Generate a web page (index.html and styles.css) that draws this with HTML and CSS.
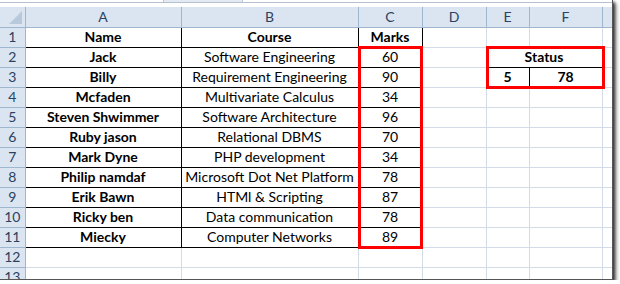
FILE: index.html
```html
<!DOCTYPE html>
<html>
<head>
<meta charset="utf-8">
<link rel="stylesheet" href="styles.css">
</head>
<body>
<div class="sheet">
  <div class="topbar">
    <div class="tab"></div>
    <div class="topline"></div>
  </div>
  <div class="gridwrap">
    <table class="grid">
      <colgroup>
        <col class="c-rh"><col class="c-a"><col class="c-b"><col class="c-c"><col class="c-d"><col class="c-e"><col class="c-f"><col class="c-g">
      </colgroup>
      <tr class="hdr">
        <th class="corner"><span class="tri"></span></th><th>A</th><th>B</th><th>C</th><th>D</th><th>E</th><th>F</th><th></th>
      </tr>
      <tr><th class="rh">1</th><td class="bd b">Name</td><td class="bd b">Course</td><td class="bd b">Marks</td><td></td><td></td><td></td><td></td></tr>
      <tr><th class="rh">2</th><td class="bd b">Jack</td><td class="bd">Software Engineering</td><td class="bd">60</td><td></td><td colspan="2" class="bd b">Status</td><td></td></tr>
      <tr><th class="rh">3</th><td class="bd b">Billy</td><td class="bd">Requirement Engineering</td><td class="bd">90</td><td></td><td class="bd b">5</td><td class="bd b">78</td><td></td></tr>
      <tr><th class="rh">4</th><td class="bd b">Mcfaden</td><td class="bd">Multivariate Calculus</td><td class="bd">34</td><td></td><td></td><td></td><td></td></tr>
      <tr><th class="rh">5</th><td class="bd b">Steven Shwimmer</td><td class="bd">Software Architecture</td><td class="bd">96</td><td></td><td></td><td></td><td></td></tr>
      <tr><th class="rh">6</th><td class="bd b">Ruby jason</td><td class="bd">Relational DBMS</td><td class="bd">70</td><td></td><td></td><td></td><td></td></tr>
      <tr><th class="rh">7</th><td class="bd b">Mark Dyne</td><td class="bd">PHP development</td><td class="bd">34</td><td></td><td></td><td></td><td></td></tr>
      <tr><th class="rh">8</th><td class="bd b">Philip namdaf</td><td class="bd">Microsoft Dot Net Platform</td><td class="bd">78</td><td></td><td></td><td></td><td></td></tr>
      <tr><th class="rh">9</th><td class="bd b">Erik Bawn</td><td class="bd">HTMl &amp; Scripting</td><td class="bd">87</td><td></td><td></td><td></td><td></td></tr>
      <tr><th class="rh">10</th><td class="bd b">Ricky ben</td><td class="bd">Data communication</td><td class="bd">78</td><td></td><td></td><td></td><td></td></tr>
      <tr><th class="rh">11</th><td class="bd b">Miecky</td><td class="bd">Computer Networks</td><td class="bd">89</td><td></td><td></td><td></td><td></td></tr>
      <tr><th class="rh">12</th><td></td><td></td><td></td><td></td><td></td><td></td><td></td></tr>
      <tr><th class="rh">13</th><td></td><td></td><td></td><td></td><td></td><td></td><td></td></tr>
    </table>
    <div class="hl hl-marks"></div>
    <div class="hl hl-status"></div>
  </div>
</div>
</body>
</html>
```
FILE: styles.css
```css
html, body {
  margin: 0;
  padding: 0;
  background: #ffffff;
}
.sheet {
  width: 613px;
  height: 280px;
  overflow: hidden;
  background: #ffffff;
  box-shadow: 2px 2px 3px rgba(0,0,0,0.75), 4px 4px 4px rgba(0,0,0,0.25);
  border-right: 1px solid #555;
  border-bottom: 1px solid #555;
  box-sizing: border-box;
  position: relative;
}
.topbar {
  height: 7px;
}
.tab {
  margin-left: 163px;
  width: 80px;
  height: 2px;
  background: #e3eaf4;
  box-sizing: border-box;
  border-left: 1px solid #b9c6d6;
  border-right: 1px solid #b9c6d6;
}
.topline {
  height: 1px;
  background: #b5c1d1;
}
.gridwrap {
  position: relative;
}
.grid {
  border-collapse: collapse;
  table-layout: fixed;
  width: 642px;
  font-family: Lato, "Liberation Sans", sans-serif;
  font-size: 14px;
  color: #000;
}
.c-rh { width: 25px; }
.c-a { width: 156px; }
.c-b { width: 177px; }
.c-c { width: 64px; }
.c-d { width: 64px; }
.c-e { width: 43px; }
.c-f { width: 73px; }
.c-g { width: 40px; }
.grid tr { height: 20px; }
.grid td, .grid th {
  padding: 0;
  height: 19px;
  text-align: center;
  vertical-align: middle;
  white-space: nowrap;
  overflow: hidden;
  line-height: 18px;
}
.grid td {
  border: 1px solid #d4dbe6;
}
.grid th {
  border: 1px solid #9eb6ce;
  background: #dbe5f1;
  color: #2b4160;
  font-weight: normal;
  font-size: 14px;
}
.grid tr:first-child th {
  border-top: none;
}
.grid th.rh {
  border-left: none;
  text-align: center;
}
.grid th.corner {
  border-left: none;
  position: relative;
}
.tri {
  position: absolute;
  right: 3px;
  bottom: 3px;
  width: 0;
  height: 0;
  border-left: 13px solid transparent;
  border-bottom: 13px solid #b8c9dc;
}
.grid td.bd {
  border: 1px solid #000;
}
.b { font-weight: bold; }
.hl {
  position: absolute;
  border: 3px solid #f00;
  box-sizing: border-box;
}
.hl-marks {
  left: 358px;
  top: 39px;
  width: 65px;
  height: 203px;
}
.hl-status {
  left: 486px;
  top: 39px;
  width: 119px;
  height: 43px;
}
```
